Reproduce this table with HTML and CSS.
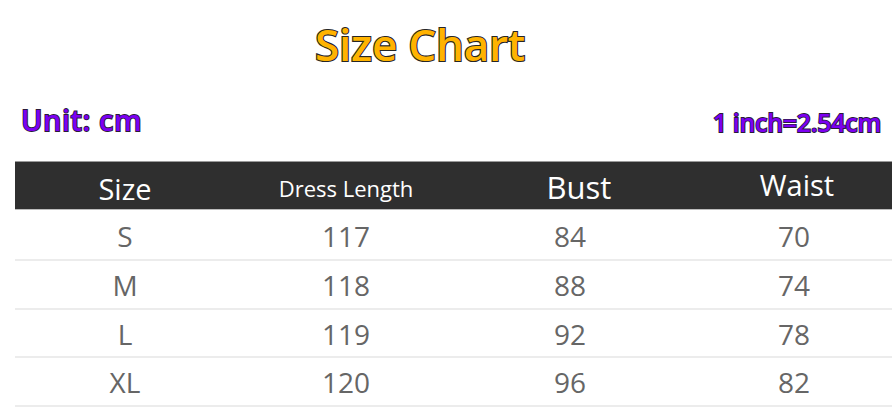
FILE: index.html
```html
<!DOCTYPE html>
<html>
<head>
<meta charset="utf-8">
<link rel="stylesheet" href="styles.css">
</head>
<body>
<div class="page">
  <h1 class="title">Size Chart</h1>
  <div class="units">
    <span class="unit-left">Unit: cm</span>
    <span class="unit-right">1 inch=2.54cm</span>
  </div>
  <div class="table">
    <div class="row head">
      <div class="cell h-size">Size</div>
      <div class="cell h-len">Dress Length</div>
      <div class="cell h-bust">Bust</div>
      <div class="cell h-waist">Waist</div>
    </div>
    <div class="row first"><div class="cell">S</div><div class="cell">117</div><div class="cell">84</div><div class="cell">70</div></div>
    <div class="row"><div class="cell">M</div><div class="cell">118</div><div class="cell">88</div><div class="cell">74</div></div>
    <div class="row"><div class="cell">L</div><div class="cell">119</div><div class="cell">92</div><div class="cell">78</div></div>
    <div class="row"><div class="cell">XL</div><div class="cell">120</div><div class="cell">96</div><div class="cell">82</div></div>
  </div>
</div>
</body>
</html>
```
FILE: styles.css
```css
html, body {
  margin: 0;
  padding: 0;
  background: #ffffff;
  overflow: hidden;
}
body {
  font-family: "Open Sans", "Noto Sans", sans-serif;
  width: 892px;
  height: 413px;
}
.page {
  display: flex;
  flex-direction: column;
}
.title {
  margin: 14px 0 0 0;
  height: 60px;
  line-height: 60px;
  font-size: 44px;
  font-weight: 550;
  text-align: center;
  padding-right: 52px;
  color: #ffb300;
  -webkit-text-stroke: 2.2px #262626;
  paint-order: stroke fill;
  letter-spacing: -0.2px;
}
.units {
  display: flex;
  justify-content: space-between;
  align-items: flex-end;
  margin-top: 28px;
  height: 36px;
  padding: 0 11px 0 21px;
}
.unit-left,
.unit-right {
  color: #7c00f2;
  font-weight: 550;
  -webkit-text-stroke: 1.8px #2a1a3a;
  paint-order: stroke fill;
}
.unit-left {
  font-size: 29px;
  line-height: 36px;
  letter-spacing: 0.5px;
}
.unit-right {
  font-size: 25px;
  line-height: 32px;
  letter-spacing: -0.3px;
}
.table {
  margin-top: 23px;
  margin-left: 15px;
  width: 890px;
}
.row {
  display: grid;
  grid-template-columns: 220px 222px 226px 222px;
  height: 48.5px;
  border-bottom: 2px solid #ececec;
  box-sizing: border-box;
  align-items: center;
  color: #666666;
  font-size: 28px;
}
.row.first {
  height: 51px;
}
.row.head {
  background: #2f2f2f;
  color: #ffffff;
  border-bottom: 1px solid #bcbcbc;
  border-top: 1px solid #9a9a9a;
  height: 49px;
}
.cell {
  text-align: center;
  line-height: 32px;
  padding-top: 2px;
}
.h-size {
  font-size: 29px;
  padding-top: 6px;
}
.h-len {
  font-size: 22px;
  padding-top: 5px;
}
.h-bust {
  font-size: 31px;
  padding-top: 3px;
  padding-left: 18px;
}
.h-waist {
  font-size: 29px;
  padding-top: 0;
  padding-bottom: 2px;
  padding-left: 6px;
}
```
